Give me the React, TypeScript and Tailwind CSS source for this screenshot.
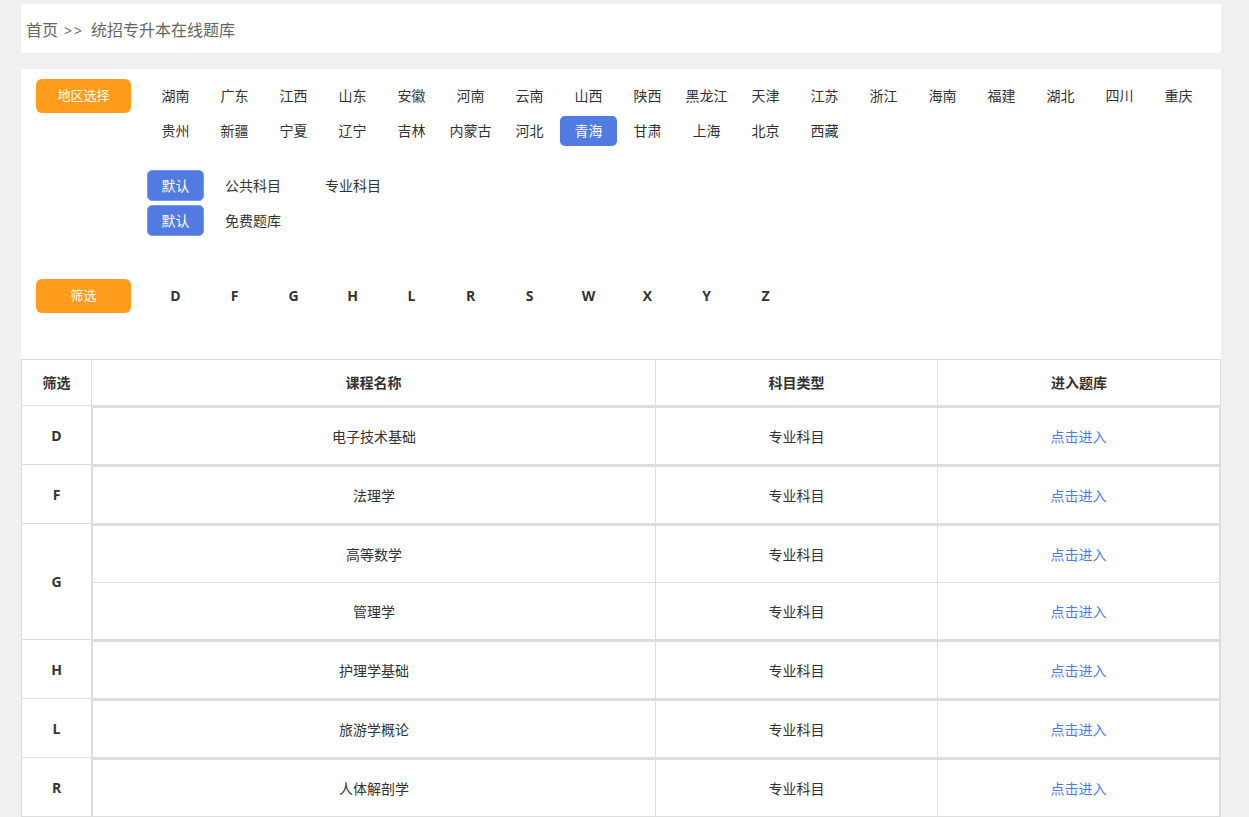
import React from 'react';

const row1 = ['湖南', '广东', '江西', '山东', '安徽', '河南', '云南', '山西', '陕西', '黑龙江', '天津', '江苏', '浙江', '海南', '福建', '湖北', '四川', '重庆'];
const row2 = ['贵州', '新疆', '宁夏', '辽宁', '吉林', '内蒙古', '河北', '青海', '甘肃', '上海', '北京', '西藏'];
const letters = ['D', 'F', 'G', 'H', 'L', 'R', 'S', 'W', 'X', 'Y', 'Z'];

const groups = [
  { letter: 'D', courses: ['电子技术基础'] },
  { letter: 'F', courses: ['法理学'] },
  { letter: 'G', courses: ['高等数学', '管理学'] },
  { letter: 'H', courses: ['护理学基础'] },
  { letter: 'L', courses: ['旅游学概论'] },
  { letter: 'R', courses: ['人体解剖学'] },
];

const font = { fontFamily: '"Open Sans", "Noto Sans CJK SC", sans-serif' };

const ProvinceRow = ({ items }: { items: string[] }) => (
  <div className="flex">
    {items.map((p) => (
      <div key={p} className="w-[59px] h-[35px] flex items-center justify-center">
        <span
          className={
            p === '青海'
              ? 'w-[57px] h-[30px] flex items-center justify-center rounded-[5px] bg-[#517be0] text-white'
              : 'text-[#333]'
          }
        >
          {p}
        </span>
      </div>
    ))}
  </div>
);

export default function App() {
  return (
    <div className="min-h-[817px] bg-[#f0f0f0] pt-[4px] text-[14px] text-[#333]" style={font}>
      {/* Breadcrumb */}
      <div className="ml-[21px] w-[1200px] h-[49px] bg-white flex items-center pl-[5px] pt-[3px] text-[16px] text-[#666]">
        首页 <span className="ml-[6px] mr-[7px] text-[14px] tracking-[2px]">&gt;&gt;</span> 统招专升本在线题库
      </div>

      {/* Main panel */}
      <div className="ml-[21px] mt-[16px] w-[1200px] bg-white pt-[9px]">
        {/* Region */}
        <div className="flex pl-[15px]">
          <div className="mt-px w-[95px] h-[34px] rounded-[6px] bg-[#ff9c1c] text-white text-[13px] flex items-center justify-center">
            地区选择
          </div>
          <div className="ml-[15px]">
            <ProvinceRow items={row1} />
            <ProvinceRow items={row2} />
          </div>
        </div>

        {/* Subject type */}
        <div className="mt-[22px] ml-[126px] flex flex-col gap-[4px]">
          <div className="flex items-center">
            <div className="w-[57px] h-[31px] rounded-[5px] bg-[#517be0] border border-[#7c9be6] text-white flex items-center justify-center">
              默认
            </div>
            <div className="ml-[21px] w-[100px]">公共科目</div>
            <div>专业科目</div>
          </div>
          <div className="flex items-center">
            <div className="w-[57px] h-[31px] rounded-[5px] bg-[#517be0] border border-[#7c9be6] text-white flex items-center justify-center">
              默认
            </div>
            <div className="ml-[21px]">免费题库</div>
          </div>
        </div>

        {/* Letter filter */}
        <div className="mt-[43px] flex pl-[15px]">
          <div className="w-[95px] h-[34px] rounded-[6px] bg-[#ff9c1c] text-white text-[13px] flex items-center justify-center">
            筛选
          </div>
          <div className="ml-[15px] flex">
            {letters.map((l) => (
              <div key={l} className="w-[59px] h-[33px] flex items-center justify-center font-bold">
                {l}
              </div>
            ))}
          </div>
        </div>

        {/* Table */}
        <div className="mt-[46px]">
          <div className="flex h-[47px] border-t border-b border-[#ddd] font-bold">
            <div className="w-[71px] border-l border-r border-[#ddd] flex items-center justify-center">筛选</div>
            <div className="w-[564px] border-r border-[#ddd] flex items-center justify-center">课程名称</div>
            <div className="w-[282px] border-r border-[#ddd] flex items-center justify-center">科目类型</div>
            <div className="flex-1 border-r border-[#ddd] flex items-center justify-center">进入题库</div>
          </div>

          {groups.map((g) => (
            <div key={g.letter} className="flex">
              <div className="w-[70px] border-l border-b border-[#ddd] flex items-center justify-center font-bold">
                {g.letter}
              </div>
              <div className="flex-1 border-l-2 border-r-2 border-t-2 border-b border-[#ddd]">
                {g.courses.map((c, i) => (
                  <div key={c} className={'flex ' + (i > 0 ? 'h-[57px] border-t border-[#ddd]' : 'h-[56px]')}>
                    <div className="w-[563px] border-r border-[#ddd] flex items-center justify-center">{c}</div>
                    <div className="w-[282px] border-r border-[#ddd] flex items-center justify-center">专业科目</div>
                    <div className="flex-1 flex items-center justify-center text-[#4f7be8]">点击进入</div>
                  </div>
                ))}
              </div>
            </div>
          ))}
        </div>
      </div>
    </div>
  );
}
